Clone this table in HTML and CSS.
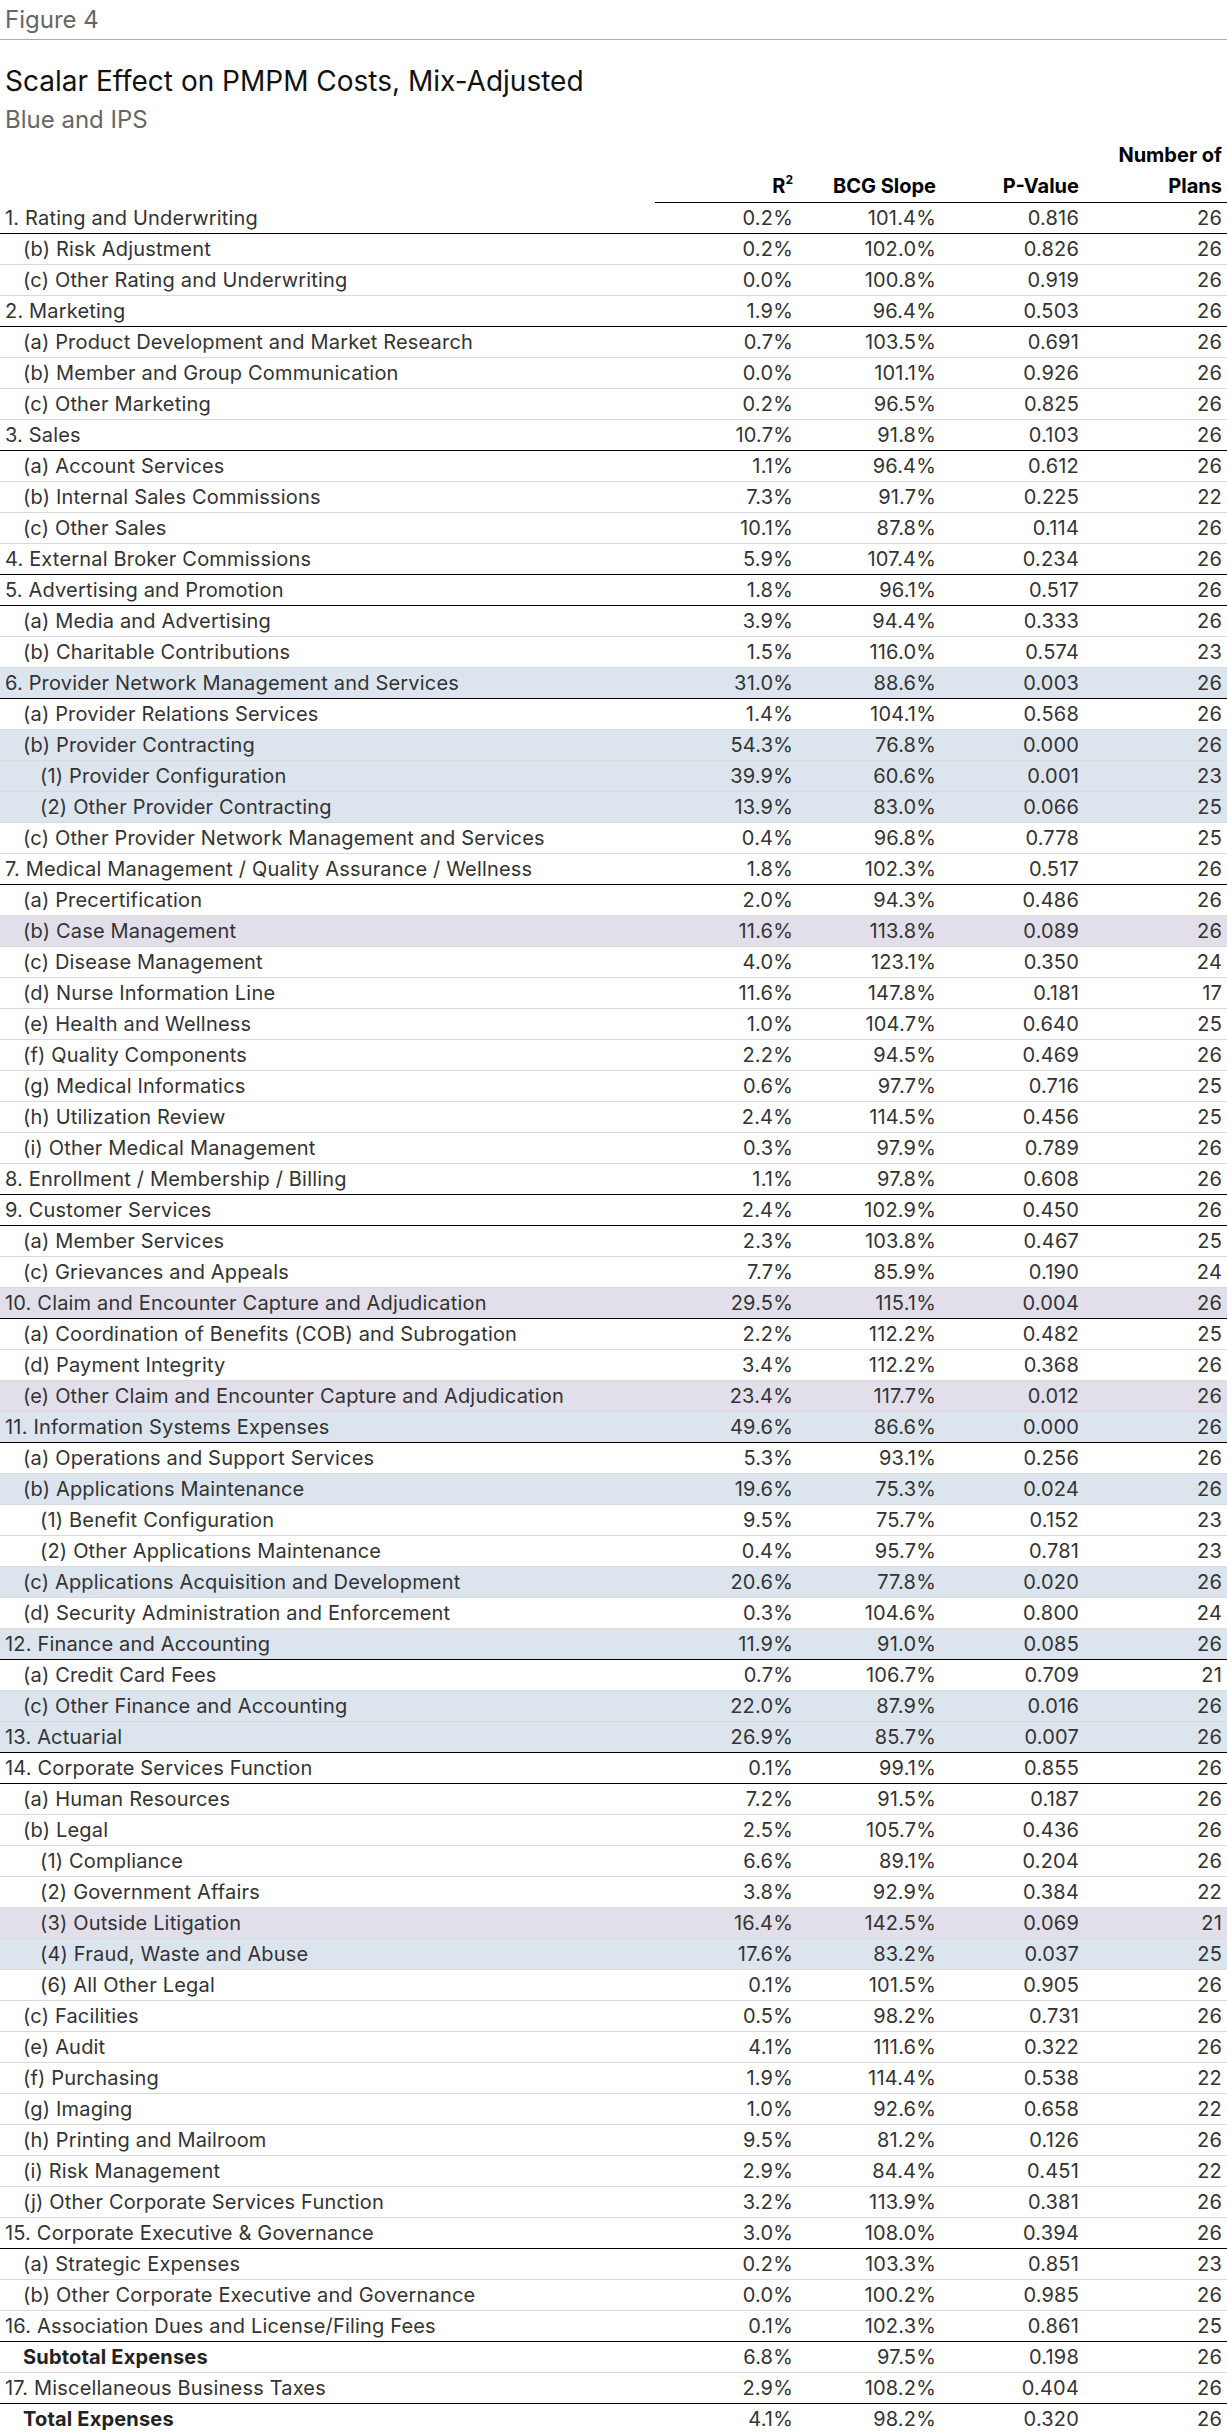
FILE: index.html
```html
<!DOCTYPE html>
<html lang="en">
<head>
<meta charset="utf-8">
<title>Figure 4</title>
<link rel="stylesheet" href="styles.css">
</head>
<body>
<div class="fig-label">Figure 4</div>
<h1 class="title">Scalar Effect on PMPM Costs, Mix-Adjusted</h1>
<div class="subtitle">Blue and IPS</div>
<table class="data">
<colgroup><col class="c-label"><col class="c-num"><col class="c-num"><col class="c-num"><col class="c-num"></colgroup>
<thead>
<tr><th class="h-label"></th><th>R<sup>2</sup></th><th>BCG Slope</th><th>P-Value</th><th>Number of<br>Plans</th></tr>
</thead>
<tbody>
<tr class="l0"><td>1. Rating and Underwriting</td><td>0.2%</td><td>101.4%</td><td>0.816</td><td>26</td></tr>
<tr class="l1"><td>(b) Risk Adjustment</td><td>0.2%</td><td>102.0%</td><td>0.826</td><td>26</td></tr>
<tr class="l1"><td>(c) Other Rating and Underwriting</td><td>0.0%</td><td>100.8%</td><td>0.919</td><td>26</td></tr>
<tr class="l0"><td>2. Marketing</td><td>1.9%</td><td>96.4%</td><td>0.503</td><td>26</td></tr>
<tr class="l1"><td>(a) Product Development and Market Research</td><td>0.7%</td><td>103.5%</td><td>0.691</td><td>26</td></tr>
<tr class="l1"><td>(b) Member and Group Communication</td><td>0.0%</td><td>101.1%</td><td>0.926</td><td>26</td></tr>
<tr class="l1"><td>(c) Other Marketing</td><td>0.2%</td><td>96.5%</td><td>0.825</td><td>26</td></tr>
<tr class="l0"><td>3. Sales</td><td>10.7%</td><td>91.8%</td><td>0.103</td><td>26</td></tr>
<tr class="l1"><td>(a) Account Services</td><td>1.1%</td><td>96.4%</td><td>0.612</td><td>26</td></tr>
<tr class="l1"><td>(b) Internal Sales Commissions</td><td>7.3%</td><td>91.7%</td><td>0.225</td><td>22</td></tr>
<tr class="l1"><td>(c) Other Sales</td><td>10.1%</td><td>87.8%</td><td>0.114</td><td>26</td></tr>
<tr class="l0"><td>4. External Broker Commissions</td><td>5.9%</td><td>107.4%</td><td>0.234</td><td>26</td></tr>
<tr class="l0"><td>5. Advertising and Promotion</td><td>1.8%</td><td>96.1%</td><td>0.517</td><td>26</td></tr>
<tr class="l1"><td>(a) Media and Advertising</td><td>3.9%</td><td>94.4%</td><td>0.333</td><td>26</td></tr>
<tr class="l1"><td>(b) Charitable Contributions</td><td>1.5%</td><td>116.0%</td><td>0.574</td><td>23</td></tr>
<tr class="l0 hl-blue"><td>6. Provider Network Management and Services</td><td>31.0%</td><td>88.6%</td><td>0.003</td><td>26</td></tr>
<tr class="l1"><td>(a) Provider Relations Services</td><td>1.4%</td><td>104.1%</td><td>0.568</td><td>26</td></tr>
<tr class="l1 hl-blue"><td>(b) Provider Contracting</td><td>54.3%</td><td>76.8%</td><td>0.000</td><td>26</td></tr>
<tr class="l2 hl-blue"><td>(1) Provider Configuration</td><td>39.9%</td><td>60.6%</td><td>0.001</td><td>23</td></tr>
<tr class="l2 hl-blue"><td>(2) Other Provider Contracting</td><td>13.9%</td><td>83.0%</td><td>0.066</td><td>25</td></tr>
<tr class="l1"><td>(c) Other Provider Network Management and Services</td><td>0.4%</td><td>96.8%</td><td>0.778</td><td>25</td></tr>
<tr class="l0"><td>7. Medical Management / Quality Assurance / Wellness</td><td>1.8%</td><td>102.3%</td><td>0.517</td><td>26</td></tr>
<tr class="l1"><td>(a) Precertification</td><td>2.0%</td><td>94.3%</td><td>0.486</td><td>26</td></tr>
<tr class="l1 hl-purple"><td>(b) Case Management</td><td>11.6%</td><td>113.8%</td><td>0.089</td><td>26</td></tr>
<tr class="l1"><td>(c) Disease Management</td><td>4.0%</td><td>123.1%</td><td>0.350</td><td>24</td></tr>
<tr class="l1"><td>(d) Nurse Information Line</td><td>11.6%</td><td>147.8%</td><td>0.181</td><td>17</td></tr>
<tr class="l1"><td>(e) Health and Wellness</td><td>1.0%</td><td>104.7%</td><td>0.640</td><td>25</td></tr>
<tr class="l1"><td>(f) Quality Components</td><td>2.2%</td><td>94.5%</td><td>0.469</td><td>26</td></tr>
<tr class="l1"><td>(g) Medical Informatics</td><td>0.6%</td><td>97.7%</td><td>0.716</td><td>25</td></tr>
<tr class="l1"><td>(h) Utilization Review</td><td>2.4%</td><td>114.5%</td><td>0.456</td><td>25</td></tr>
<tr class="l1"><td>(i) Other Medical Management</td><td>0.3%</td><td>97.9%</td><td>0.789</td><td>26</td></tr>
<tr class="l0"><td>8. Enrollment / Membership / Billing</td><td>1.1%</td><td>97.8%</td><td>0.608</td><td>26</td></tr>
<tr class="l0"><td>9. Customer Services</td><td>2.4%</td><td>102.9%</td><td>0.450</td><td>26</td></tr>
<tr class="l1"><td>(a) Member Services</td><td>2.3%</td><td>103.8%</td><td>0.467</td><td>25</td></tr>
<tr class="l1"><td>(c) Grievances and Appeals</td><td>7.7%</td><td>85.9%</td><td>0.190</td><td>24</td></tr>
<tr class="l0 hl-purple"><td>10. Claim and Encounter Capture and Adjudication</td><td>29.5%</td><td>115.1%</td><td>0.004</td><td>26</td></tr>
<tr class="l1"><td>(a) Coordination of Benefits (COB) and Subrogation</td><td>2.2%</td><td>112.2%</td><td>0.482</td><td>25</td></tr>
<tr class="l1"><td>(d) Payment Integrity</td><td>3.4%</td><td>112.2%</td><td>0.368</td><td>26</td></tr>
<tr class="l1 hl-purple"><td>(e) Other Claim and Encounter Capture and Adjudication</td><td>23.4%</td><td>117.7%</td><td>0.012</td><td>26</td></tr>
<tr class="l0 hl-blue"><td>11. Information Systems Expenses</td><td>49.6%</td><td>86.6%</td><td>0.000</td><td>26</td></tr>
<tr class="l1"><td>(a) Operations and Support Services</td><td>5.3%</td><td>93.1%</td><td>0.256</td><td>26</td></tr>
<tr class="l1 hl-blue"><td>(b) Applications Maintenance</td><td>19.6%</td><td>75.3%</td><td>0.024</td><td>26</td></tr>
<tr class="l2"><td>(1) Benefit Configuration</td><td>9.5%</td><td>75.7%</td><td>0.152</td><td>23</td></tr>
<tr class="l2"><td>(2) Other Applications Maintenance</td><td>0.4%</td><td>95.7%</td><td>0.781</td><td>23</td></tr>
<tr class="l1 hl-blue"><td>(c) Applications Acquisition and Development</td><td>20.6%</td><td>77.8%</td><td>0.020</td><td>26</td></tr>
<tr class="l1"><td>(d) Security Administration and Enforcement</td><td>0.3%</td><td>104.6%</td><td>0.800</td><td>24</td></tr>
<tr class="l0 hl-blue"><td>12. Finance and Accounting</td><td>11.9%</td><td>91.0%</td><td>0.085</td><td>26</td></tr>
<tr class="l1"><td>(a) Credit Card Fees</td><td>0.7%</td><td>106.7%</td><td>0.709</td><td>21</td></tr>
<tr class="l1 hl-blue"><td>(c) Other Finance and Accounting</td><td>22.0%</td><td>87.9%</td><td>0.016</td><td>26</td></tr>
<tr class="l0 hl-blue"><td>13. Actuarial</td><td>26.9%</td><td>85.7%</td><td>0.007</td><td>26</td></tr>
<tr class="l0"><td>14. Corporate Services Function</td><td>0.1%</td><td>99.1%</td><td>0.855</td><td>26</td></tr>
<tr class="l1"><td>(a) Human Resources</td><td>7.2%</td><td>91.5%</td><td>0.187</td><td>26</td></tr>
<tr class="l1"><td>(b) Legal</td><td>2.5%</td><td>105.7%</td><td>0.436</td><td>26</td></tr>
<tr class="l2"><td>(1) Compliance</td><td>6.6%</td><td>89.1%</td><td>0.204</td><td>26</td></tr>
<tr class="l2"><td>(2) Government Affairs</td><td>3.8%</td><td>92.9%</td><td>0.384</td><td>22</td></tr>
<tr class="l2 hl-purple"><td>(3) Outside Litigation</td><td>16.4%</td><td>142.5%</td><td>0.069</td><td>21</td></tr>
<tr class="l2 hl-blue"><td>(4) Fraud, Waste and Abuse</td><td>17.6%</td><td>83.2%</td><td>0.037</td><td>25</td></tr>
<tr class="l2"><td>(6) All Other Legal</td><td>0.1%</td><td>101.5%</td><td>0.905</td><td>26</td></tr>
<tr class="l1"><td>(c) Facilities</td><td>0.5%</td><td>98.2%</td><td>0.731</td><td>26</td></tr>
<tr class="l1"><td>(e) Audit</td><td>4.1%</td><td>111.6%</td><td>0.322</td><td>26</td></tr>
<tr class="l1"><td>(f) Purchasing</td><td>1.9%</td><td>114.4%</td><td>0.538</td><td>22</td></tr>
<tr class="l1"><td>(g) Imaging</td><td>1.0%</td><td>92.6%</td><td>0.658</td><td>22</td></tr>
<tr class="l1"><td>(h) Printing and Mailroom</td><td>9.5%</td><td>81.2%</td><td>0.126</td><td>26</td></tr>
<tr class="l1"><td>(i) Risk Management</td><td>2.9%</td><td>84.4%</td><td>0.451</td><td>22</td></tr>
<tr class="l1"><td>(j) Other Corporate Services Function</td><td>3.2%</td><td>113.9%</td><td>0.381</td><td>26</td></tr>
<tr class="l0"><td>15. Corporate Executive &amp; Governance</td><td>3.0%</td><td>108.0%</td><td>0.394</td><td>26</td></tr>
<tr class="l1"><td>(a) Strategic Expenses</td><td>0.2%</td><td>103.3%</td><td>0.851</td><td>23</td></tr>
<tr class="l1"><td>(b) Other Corporate Executive and Governance</td><td>0.0%</td><td>100.2%</td><td>0.985</td><td>26</td></tr>
<tr class="l0"><td>16. Association Dues and License/Filing Fees</td><td>0.1%</td><td>102.3%</td><td>0.861</td><td>25</td></tr>
<tr class="l1 total"><td>Subtotal Expenses</td><td>6.8%</td><td>97.5%</td><td>0.198</td><td>26</td></tr>
<tr class="l0"><td>17. Miscellaneous Business Taxes</td><td>2.9%</td><td>108.2%</td><td>0.404</td><td>26</td></tr>
<tr class="l1 total last"><td>Total Expenses</td><td>4.1%</td><td>98.2%</td><td>0.320</td><td>26</td></tr>
</tbody>
</table>
</body>
</html>
```
FILE: styles.css
```css
html, body {
  margin: 0;
  padding: 0;
  background: #fff;
}
body {
  font-family: Inter, "Noto Sans", "Liberation Sans", sans-serif;
  color: #333;
}
.fig-label {
  font-size: 24px;
  line-height: 24px;
  color: #666;
  padding: 8px 5px 7px;
  border-bottom: 1px solid #aaa;
}
.title {
  margin: 26px 0 0;
  padding: 0 5px;
  font-size: 28px;
  line-height: 30px;
  font-weight: 400;
  color: #111;
}
.subtitle {
  margin-top: 11px;
  padding: 0 5px;
  font-size: 24px;
  line-height: 26px;
  color: #666;
}
.data {
  margin-top: 7px;
  width: 1227px;
  table-layout: fixed;
  border-collapse: collapse;
  font-size: 20px;
}
.c-label { width: 655px; }
.c-num { width: 143px; }
.data th {
  font-weight: 700;
  color: #000;
  text-align: right;
  vertical-align: bottom;
  line-height: 31px;
  padding: 0 5px;
  border-bottom: 1px solid #000;
}
.data th.h-label {
  border-bottom: none;
}
.data th sup {
  font-size: 12px;
  line-height: 0;
  vertical-align: 9px;
}
.data td {
  line-height: 30px;
  padding: 0 5px;
  text-align: right;
  color: #333;
  letter-spacing: 0.18px;
  border-bottom: 1px solid #d9d9d9;
  white-space: nowrap;
}
.data td:first-child {
  text-align: left;
}
.l0 td { border-bottom-color: #000; }
.l1 td:first-child { padding-left: 23px; }
.l2 td:first-child { padding-left: 40px; }
.total td:first-child { font-weight: 700; color: #222; }
.last td { border-bottom: none; }
.hl-blue td { background: #dce4ee; }
.hl-purple td { background: #e2dfeb; }
```
